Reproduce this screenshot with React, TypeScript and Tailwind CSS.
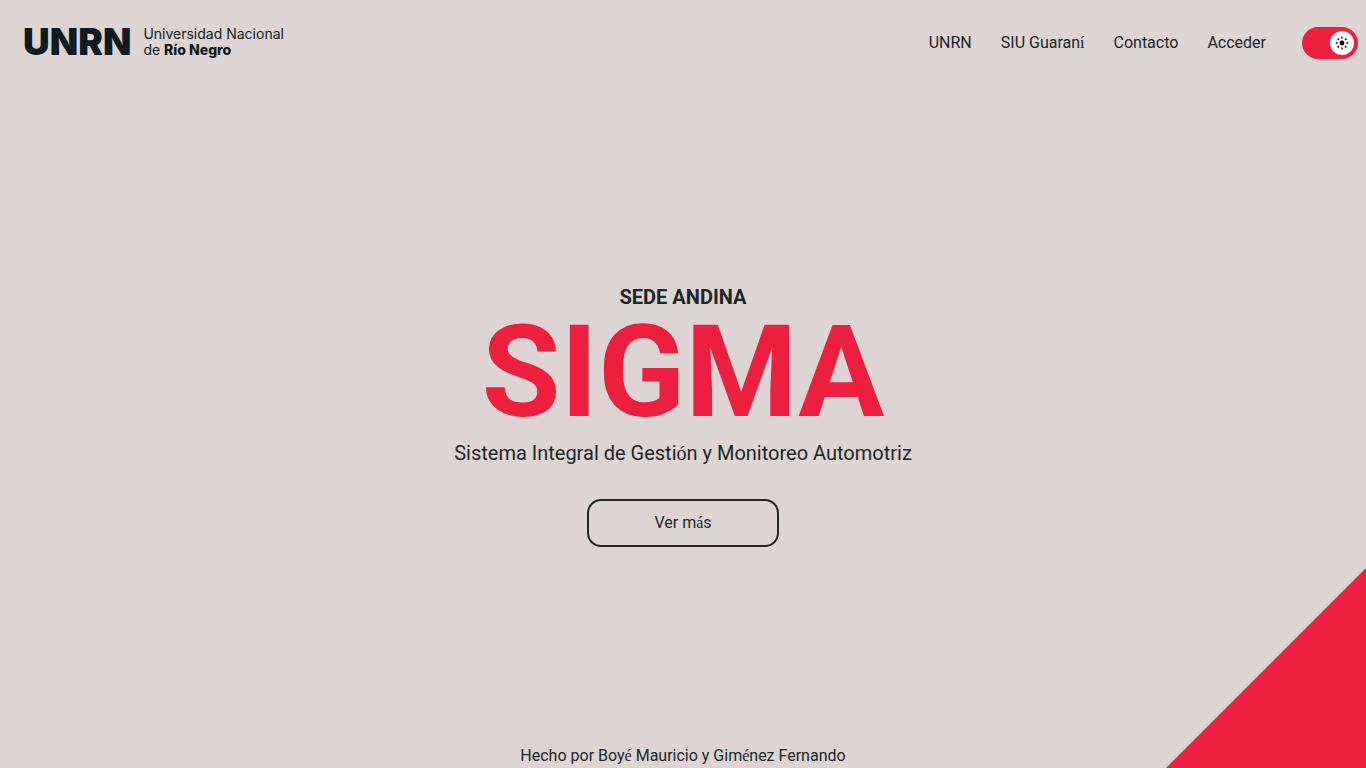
import { useState } from "react";

const links = [
  { text: "UNRN", href: "#unrn" },
  { text: "SIU Guaraní", href: "#siu-guarani" },
  { text: "Contacto", href: "#contacto" },
  { text: "Acceder", href: "#acceder" },
];

function Label({ text }: { text: string }) {
  return (
    <>
      {text.split(/([áéíóú])/).map((part, i) =>
        i % 2 === 1 ? (
          <span key={i} className="font-['Liberation_Serif',serif]">
            {part}
          </span>
        ) : (
          part
        ),
      )}
    </>
  );
}

function Logo() {
  return (
    <a
      href="#inicio"
      aria-label="Universidad Nacional de Río Negro"
      className="flex items-center gap-3 text-[#0f1a22]"
    >
      <span className="pb-0.5 font-['Inter',sans-serif] text-[37px] leading-8 font-black">UNRN</span>
      <span className="pb-0.5 font-['Inter',sans-serif] text-[14px] leading-4 font-normal whitespace-nowrap">
        Universidad Nacional
        <br />
        de <b className="font-extrabold">Río Negro</b>
      </span>
    </a>
  );
}

function SunIcon() {
  return (
    <svg viewBox="0 0 16 16" className="size-4" fill="none" stroke="#000" strokeWidth="1.4" aria-hidden="true">
      <circle cx="8" cy="8" r="2.4" fill="#000" stroke="none" />
      <path d="M8 1.8v1.8M8 12.4v1.8M1.8 8h1.8M12.4 8h1.8M3.6 3.6l1.3 1.3M11.1 11.1l1.3 1.3M3.6 12.4l1.3-1.3M11.1 4.9l1.3-1.3" />
    </svg>
  );
}

export default function App() {
  const [light, setLight] = useState(true);
  return (
    <div className="relative flex min-h-screen flex-col overflow-hidden bg-[#ded4d3] font-['Roboto',sans-serif] text-[#212529]">
      <div
        aria-hidden="true"
        className="absolute right-0 bottom-0 size-[200px] bg-[#ec1f3f] [clip-path:polygon(100%_0,100%_100%,0_100%)]"
      />
      <header className="flex items-center justify-between pt-[26px] pr-2 pl-[23px]">
        <Logo />
        <div className="flex items-center gap-9">
          <nav className="flex gap-[29px] text-base leading-6">
            {links.map((l) => (
              <a key={l.href} href={l.href} className="whitespace-nowrap">
                <Label text={l.text} />
              </a>
            ))}
          </nav>
          <label className="flex h-8 w-14 cursor-pointer items-center rounded-full bg-[#ec1f3f] p-1 has-checked:justify-end">
            <input
              type="checkbox"
              aria-label="Modo claro"
              checked={light}
              onChange={(e) => setLight(e.target.checked)}
              className="sr-only"
            />
            <span className="flex size-6 items-center justify-center rounded-full bg-white">
              <SunIcon />
            </span>
          </label>
        </div>
      </header>
      <main className="flex flex-1 flex-col items-center justify-center pt-7 text-center">
        <h2 className="text-[20px] leading-6 font-bold">SEDE ANDINA</h2>
        <h1 className="text-[128px] leading-[126px] font-bold text-[#ec1f3f]">SIGMA</h1>
        <p className="text-[20px] leading-9">
          <Label text="Sistema Integral de Gestión y Monitoreo Automotriz" />
        </p>
        <button type="button" className="mt-7 h-12 w-48 rounded-[14px] border-2 border-[#212529] text-base">
          <Label text="Ver más" />
        </button>
      </main>
      <footer className="text-center text-base leading-6">
        <Label text="Hecho por Boyé Mauricio y Giménez Fernando" />
      </footer>
    </div>
  );
}
